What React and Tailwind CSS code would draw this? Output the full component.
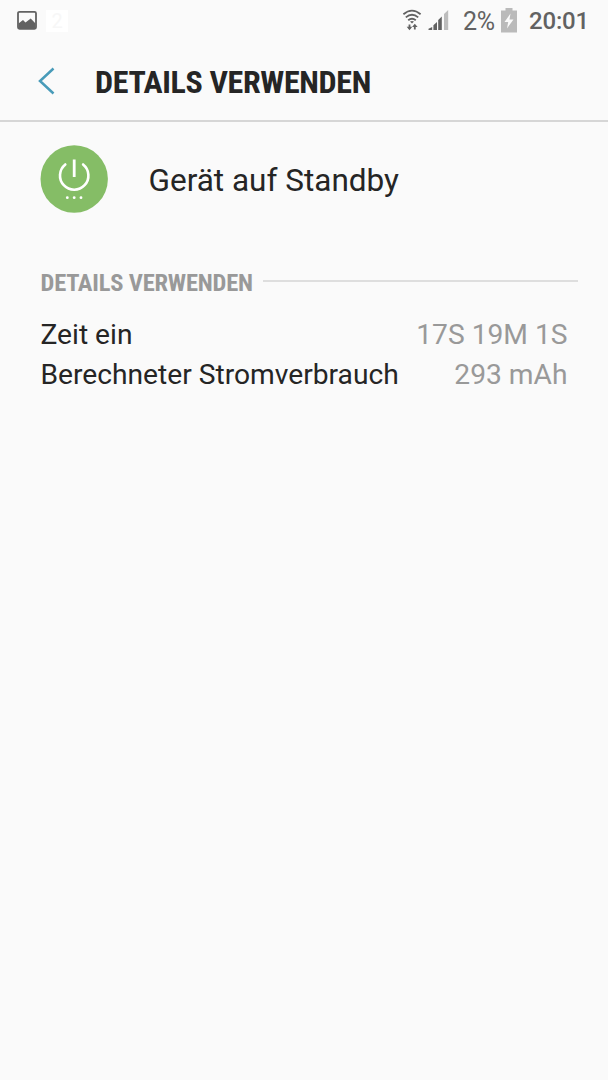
import React from 'react'

const details = [
  { label: 'Zeit ein', value: '17S 19M 1S' },
  { label: 'Berechneter Stromverbrauch', value: '293 mAh' },
]

function PictureIcon() {
  return (
    <svg width="22" height="22" viewBox="0 0 22 22" className="ml-4 mt-[9px]">
      <rect x="2" y="2.8" width="18" height="17" rx="1.5" fill="none" stroke="#626262" strokeWidth="1.8" />
      <path d="M2.5 14.5 L7 11 L9.5 13.5 L14.7 9.5 L19.5 14.5 V19.5 H2.5 Z" fill="#626262" />
    </svg>
  )
}

function WifiIcon() {
  return (
    <svg width="20" height="24" viewBox="0 0 20 24" className="ml-[402px] mt-2">
      <g fill="none" stroke="#626262" strokeWidth="1.8">
        <path d="M1.4 6.3 Q10 -1.1 18.6 6.3" />
        <path d="M3.8 9.4 Q10 4.1 16.2 9.4" />
        <path d="M6.2 12.3 Q10 9.1 13.8 12.3" />
        <path d="M7.5 16.5 V21 M12.8 21.5 V18" />
      </g>
      <path d="M8 13.5 L10 15.5 L12 13.5 Q10 12.3 8 13.5 Z" fill="#626262" />
      <path d="M4.7 18.8 H10.3 L7.5 22.2 Z M10 19 H15.6 L12.8 15.8 Z" fill="#626262" />
    </svg>
  )
}

function SignalIcon() {
  return (
    <svg width="22" height="22" viewBox="0 0 22 22">
      <path d="M0.5 20 V18.8 L4.2 17 V20 Z M5.4 20 V15.3 L9 12 V20 Z M10.2 20 V10 L13.8 6.5 V20 Z" fill="#626262" />
      <path d="M16 20 V4 L20.2 0 V20 Z" fill="#bdbdbd" />
    </svg>
  )
}

function BatteryIcon() {
  return (
    <svg width="16" height="25" viewBox="0 0 16 25">
      <path d="M4.5 0 H11.5 V2.5 H16 V24.5 H0 V2.5 H4.5 Z" fill="#bababa" />
      <path d="M9.5 5.5 L3.5 14 H7.2 L6 20.5 L12.5 11.5 H8.5 Z" fill="#fafafa" />
    </svg>
  )
}

function StatusBar() {
  return (
    <div className="relative h-10 text-2xl leading-10 text-[#626262]">
      <div className="flex">
        <PictureIcon />
        <div className="ml-2 mt-[10px] h-[22px] w-[22px] bg-white text-center text-xl leading-[22px] text-[#f7f7f7]">2</div>
      </div>
      <div className="absolute inset-0 flex">
        <WifiIcon />
        <div className="ml-[6px] mt-[10px]"><SignalIcon /></div>
        <span className="ml-[13px] mt-[2px] w-8 whitespace-nowrap text-[25px] tracking-[-0.2px]">2%</span>
        <div className="ml-[6px] mt-2"><BatteryIcon /></div>
        <span className="ml-3 mt-px whitespace-nowrap font-medium tracking-[-0.2px]">20:01</span>
      </div>
    </div>
  )
}

export default function App() {
  return (
    <div className="h-[1080px] w-[608px] overflow-hidden bg-[#fafafa] font-['Roboto',sans-serif] text-[#252525]">
      <StatusBar />
      <header className="flex h-[82px] items-center border-b-2 border-[#d6d6d6] pl-[38px]">
        <svg width="18" height="28" viewBox="0 0 18 28" fill="none" stroke="#489bb9" strokeWidth="2.5" className="mt-[2px]">
          <path d="M15.5 1.5 L2 14 L15.5 26.5" />
        </svg>
        <h1 className="ml-[39px] mt-[4px] whitespace-nowrap font-['Roboto_Condensed','Roboto',sans-serif] text-[32px] font-bold leading-10 tracking-[-0.35px] [font-stretch:75%]">
          DETAILS VERWENDEN
        </h1>
      </header>

      <div className="flex items-center pl-10 pt-[23px]">
        <svg width="68" height="68" viewBox="0 0 68 68">
          <circle cx="34.2" cy="34" r="33.7" fill="#85bd66" />
          <g fill="none" stroke="#fff" strokeWidth="2.6" strokeLinecap="round">
            <path d="M34.2 14.5 V32" strokeLinecap="butt" strokeWidth="2.8" />
            <path d="M25.3 19.5 A14.2 14.2 0 1 0 43.1 19.5" />
          </g>
          <g fill="#fff">
            <circle cx="27.3" cy="52.7" r="1.4" />
            <circle cx="34.2" cy="52.7" r="1.4" />
            <circle cx="41" cy="52.7" r="1.4" />
          </g>
        </svg>
        <span className="ml-[40.5px] mt-[4px] text-[31.5px] leading-10">Gerät auf Standby</span>
      </div>

      <section className="mt-[49px] pl-[40.5px]">
        <div className="flex h-10 items-center pr-[30px]">
          <h2 className="mt-px whitespace-nowrap font-['Roboto_Condensed','Roboto',sans-serif] text-[24.5px] font-bold leading-10 tracking-[-0.2px] text-[#999] [font-stretch:75%]">
            DETAILS VERWENDEN
          </h2>
          <div className="mb-[2px] ml-[10px] h-[2px] flex-1 bg-[#dedede]" />
        </div>
        <div className="mt-[13px] pr-[40.5px]">
          {details.map((item) => (
            <div key={item.label} className="flex justify-between text-[28.2px] leading-[40px]">
              <span>{item.label}</span>
              <span className="text-[#999]">{item.value}</span>
            </div>
          ))}
        </div>
      </section>
    </div>
  )
}
